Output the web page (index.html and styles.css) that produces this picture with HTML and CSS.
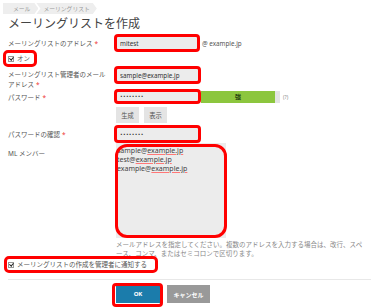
FILE: index.html
```html
<!DOCTYPE html>
<html lang="ja">
<head>
  <meta charset="UTF-8">
  <meta name="viewport" content="width=device-width, initial-scale=1.0">
  <title>メーリングリストを作成</title>
  <link rel="stylesheet" href="styles.css">
</head>
<body>
  <div class="page">
    <nav class="crumbs">
      <span class="crumb">メール</span>
      <span class="crumb">メーリングリスト</span>
    </nav>
    <h1 class="title">メーリングリストを作成</h1>

    <form class="ml-form">
      <div class="row row-addr">
        <label for="addr">メーリングリストのアドレス<em>*</em></label>
        <div class="field">
          <span class="mark"><input type="text" id="addr" value="mitest"></span>
          <span class="domain">@ example.jp</span>
        </div>
      </div>

      <div class="row-check row-on">
        <label class="check mark mark-on"><span class="box"></span>オン</label>
      </div>

      <div class="row row-admin">
        <label for="admin">メーリングリスト管理者のメール<br>アドレス<em>*</em></label>
        <div class="field">
          <span class="mark"><input type="text" id="admin" class="wide" value="sample@example.jp"></span>
        </div>
      </div>

      <div class="row row-pass">
        <label for="pass">パスワード<em>*</em></label>
        <div class="field">
          <span class="mark mark-pass"><input type="password" id="pass" class="wide" value="password"></span>
          <div class="strength"><div class="strength-bar">強</div></div>
          <span class="hint">(?)</span>
        </div>
      </div>

      <div class="row row-tools">
        <span></span>
        <div class="field">
          <button type="button" class="btn-sub">生成</button>
          <button type="button" class="btn-sub">表示</button>
        </div>
      </div>

      <div class="row row-confirm">
        <label for="confirm">パスワードの確認<em>*</em></label>
        <div class="field">
          <span class="mark"><input type="password" id="confirm" class="wide" value="password"></span>
        </div>
      </div>

      <div class="row row-members">
        <label>ML メンバー</label>
        <div class="field">
          <div class="mark mark-area">
            <div class="members">
              <div>sample@<span class="sp">example.jp</span></div>
              <div>test@<span class="sp">example.jp</span></div>
              <div>example@<span class="sp">example.jp</span></div>
            </div>
          </div>
        </div>
      </div>

      <div class="row row-help">
        <span></span>
        <p class="help">メールアドレスを指定してください。複数のアドレスを入力する場合は、改行、スペース、コンマ、またはセミコロンで区切ります。</p>
      </div>

      <div class="row-check row-notify">
        <label class="check mark mark-notify"><span class="box"></span>メーリングリストの作成を管理者に通知する</label>
      </div>

      <div class="actions">
        <span class="mark mark-ok"><button type="submit" class="btn-ok">OK</button></span>
        <button type="reset" class="btn-cancel">キャンセル</button>
      </div>
    </form>
  </div>
</body>
</html>
```

FILE: styles.css
```css
* {
  box-sizing: border-box;
}
body {
  margin: 0;
  font-family: "Noto Sans", "Noto Sans CJK JP", sans-serif;
  color: #555;
  background-color: #fff;
}
.page {
  width: 371px;
  height: 307px;
  padding: 3px 0 0 8px;
  overflow: hidden;
}

/* パンくず */
.crumbs {
  display: flex;
  height: 11px;
  margin-left: -5px;
}
.crumb {
  display: flex;
  align-items: center;
  height: 11px;
  padding: 0 8px 0 10px;
  font-size: 5.8px;
  color: #999;
  background-color: #eee;
  clip-path: polygon(0 0, calc(100% - 4px) 0, 100% 50%, calc(100% - 4px) 100%, 0 100%, 4px 50%);
}
.crumb:first-child {
  clip-path: polygon(0 0, calc(100% - 4px) 0, 100% 50%, calc(100% - 4px) 100%, 0 100%);
}
.crumb + .crumb {
  margin-left: -2px;
  padding-left: 7px;
  padding-right: 7px;
}

.title {
  margin: 2px 0 0;
  font-size: 12px;
  line-height: 16px;
  font-weight: normal;
  color: #444;
}

/* フォーム */
.ml-form {
  width: 363px;
  font-size: 6.5px;
}
.row {
  display: grid;
  grid-template-columns: 108px 1fr;
  align-items: center;
}
.row label em {
  margin-left: 2px;
  font-style: normal;
  color: #e33;
}
.field {
  display: flex;
  align-items: center;
}
.field input {
  width: 82px;
  height: 14px;
  padding: 0 3px;
  border: 1px solid #e2e2e2;
  background-color: #ececec;
  font-family: inherit;
  font-size: 6.3px;
  color: #333;
}
.field input.wide {
  width: 83px;
}
.field input[type="password"] {
  font-family: "DejaVu Sans", sans-serif;
  font-size: 4.5px;
  letter-spacing: 0.3px;
}

/* 赤い注記枠 */
.mark {
  position: relative;
  display: inline-block;
}
.mark::after {
  content: "";
  position: absolute;
  inset: -2px;
  border: 3px solid #f00;
  border-radius: 4px;
  pointer-events: none;
}

.row-addr {
  margin-top: 4px;
}
.domain {
  margin-left: 4px;
  font-size: 6.3px;
  color: #555;
}

.row-check {
  display: flex;
  align-items: center;
}
.check {
  display: inline-flex;
  align-items: center;
  height: 9px;
  line-height: 9px;
}
.check .box {
  position: relative;
  width: 6px;
  height: 6px;
  margin-right: 3px;
  border: 1px solid #999;
  background-color: #fff;
}
.check .box::before {
  content: "";
  position: absolute;
  left: 1px;
  top: -0.5px;
  width: 1.5px;
  height: 3px;
  border-right: 1px solid #222;
  border-bottom: 1px solid #222;
  transform: rotate(40deg);
}
.row-on {
  height: 17px;
}
.mark-on::after {
  inset: -4px -7px -4px -5px;
  border-radius: 5px;
}

.row-admin {
  align-items: start;
  padding-top: 1px;
}
.row-admin label {
  padding-top: 2px;
  line-height: 10px;
}

.row-pass {
  height: 13px;
}
.row-pass input {
  height: 13px;
}
.mark-pass::after {
  inset: -1px -2px;
}
.strength {
  width: 79px;
  height: 12px;
  margin-left: 2px;
  background-color: #e4e4e4;
}
.strength-bar {
  width: 74px;
  height: 12px;
  background-color: #8cc63e;
  color: #24400e;
  font-size: 6px;
  font-weight: bold;
  line-height: 12px;
  text-align: center;
}
.hint {
  margin-left: 3px;
  font-size: 5px;
  color: #888;
}

.row-tools {
  margin-top: 4px;
}
.btn-sub {
  width: 23px;
  height: 16px;
  margin-right: 5px;
  padding: 0;
  border: none;
  background-color: #e4e4e4;
  font-family: inherit;
  font-size: 6.3px;
  color: #555;
}

.row-confirm {
  margin-top: 4px;
}
.row-confirm input {
  width: 84px;
}

.row-members {
  align-items: start;
  margin-top: 2px;
}
.row-members label {
  padding-top: 5px;
}
.mark-area::after {
  inset: 1px -1px 0 -1px;
  border-radius: 12px;
}
.members {
  width: 110px;
  height: 95px;
  padding: 3px 2px 0 1px;
  background-color: #ececec;
  font-size: 7px;
  line-height: 9px;
  color: #444;
  overflow: hidden;
}
.members .sp {
  text-decoration: underline solid #f77;
  text-underline-offset: 1px;
}

.row-help {
  align-items: start;
  margin-top: 2px;
}
.help {
  width: 250px;
  margin: 0;
  font-size: 6.5px;
  line-height: 9px;
  color: #888;
}

.row-notify {
  margin-top: 2px;
}
.mark-notify::after {
  inset: -4px -11px -4px -4px;
  border-radius: 5px;
}

.actions {
  display: flex;
  margin-top: 10px;
  padding-top: 5px;
  padding-left: 108px;
  border-top: 1px solid #e8e8e8;
}
.btn-ok,
.btn-cancel {
  height: 18px;
  padding: 0;
  border: none;
  font-family: inherit;
  font-size: 6px;
  font-weight: bold;
  color: #fff;
}
.btn-ok {
  width: 44px;
  background-color: #1b7cab;
}
.mark-ok::after {
  inset: -2px -3px -4px -4px;
}
.btn-cancel {
  width: 43px;
  margin-left: 7px;
  background-color: #999;
}
```
